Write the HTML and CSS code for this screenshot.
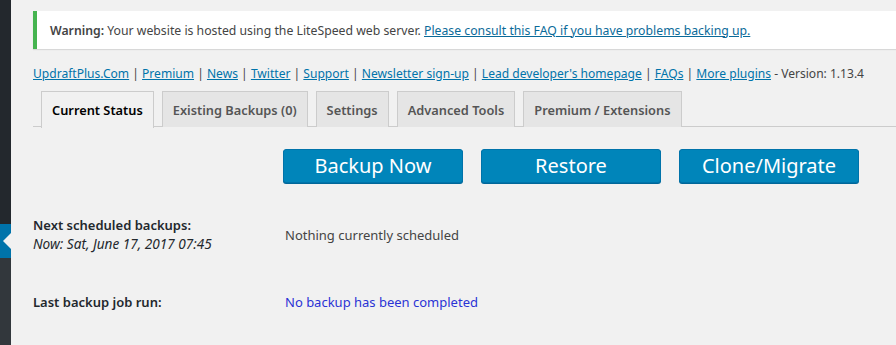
FILE: index.html
```html
<!DOCTYPE html>
<html>
<head>
<meta charset="utf-8">
<link rel="stylesheet" href="styles.css">
</head>
<body>
<div class="layout">
  <aside class="sidebar">
    <div class="menu-top"></div>
    <div class="menu-current"><span class="arrow"></span></div>
    <div class="submenu"></div>
  </aside>
  <main class="content">
    <div class="notice">
      <p><strong>Warning:</strong> Your website is hosted using the LiteSpeed web server. <a href="#">Please consult this FAQ if you have problems backing up.</a></p>
    </div>
    <p class="links"><a href="#">UpdraftPlus.Com</a> | <a href="#">Premium</a> | <a href="#">News</a> | <a href="#">Twitter</a> | <a href="#">Support</a> | <a href="#">Newsletter sign-up</a> | <a href="#">Lead developer's homepage</a> | <a href="#">FAQs</a> | <a href="#">More plugins</a> - Version: 1.13.4</p>
    <nav class="tabs">
      <a class="tab active" href="#">Current Status</a>
      <a class="tab" href="#">Existing Backups (0)</a>
      <a class="tab" href="#">Settings</a>
      <a class="tab" href="#">Advanced Tools</a>
      <a class="tab" href="#">Premium / Extensions</a>
    </nav>
    <div class="actions">
      <button class="btn">Backup Now</button>
      <button class="btn">Restore</button>
      <button class="btn">Clone/Migrate</button>
    </div>
    <div class="status-row first">
      <div class="label">
        <div class="label-title">Next scheduled backups:</div>
        <div class="label-sub">Now: Sat, June 17, 2017 07:45</div>
      </div>
      <div class="value">Nothing currently scheduled</div>
    </div>
    <div class="status-row second">
      <div class="label"><div class="label-title">Last backup job run:</div></div>
      <div class="value blue">No backup has been completed</div>
    </div>
  </main>
</div>
</body>
</html>
```
FILE: styles.css
```css
html, body {
  margin: 0;
  padding: 0;
  background: #f1f1f1;
  height: 345px;
  overflow: hidden;
}
body {
  font-family: "Noto Sans", "Open Sans", sans-serif;
  font-size: 13px;
  color: #444;
}
.layout {
  display: flex;
  height: 345px;
}
.sidebar {
  width: 11px;
  flex: none;
  display: flex;
  flex-direction: column;
}
.menu-top {
  height: 224px;
  background: #23282d;
}
.menu-current {
  height: 34px;
  background: #0073aa;
  position: relative;
}
.arrow {
  position: absolute;
  right: 0;
  top: 9px;
  width: 0;
  height: 0;
  border-top: 8px solid transparent;
  border-bottom: 8px solid transparent;
  border-right: 8px solid #f1f1f1;
}
.submenu {
  flex: 1;
  background: #32373c;
}
.content {
  flex: 1;
  padding-left: 22px;
  overflow: hidden;
}
.notice {
  margin-top: 11px;
  margin-right: -20px;
  background: #fff;
  border-left: 4px solid #46b450;
  box-shadow: 0 1px 1px rgba(0,0,0,0.1);
  padding: 1px 12px;
  height: 36px;
  display: flex;
  align-items: center;
}
.notice p {
  margin: 0;
  font-size: 12.25px;
  padding-left: 1px;
}
.notice strong {
  font-weight: 600;
}
a {
  color: #0073aa;
}
.notice a {
  color: #0a6a99;
}
.links {
  margin: 12px 0 0;
  line-height: 26px;
  font-size: 12.07px;
  white-space: nowrap;
}
.tabs {
  margin-top: 4px;
  display: flex;
  gap: 8px;
  padding-left: 8px;
  border-bottom: 1px solid #ccc;
  height: 35px;
  margin-right: -20px;
}
.tab {
  display: flex;
  align-items: center;
  padding: 0 10px;
  background: #e5e5e5;
  border: 1px solid #ccc;
  border-bottom: none;
  font-size: 12.8px;
  font-weight: 600;
  color: #555;
  text-decoration: none;
  height: 35px;
}
.tab.active {
  background: #f1f1f1;
  color: #000;
  height: 36px;
  margin-bottom: -1px;
}
.actions {
  display: flex;
  gap: 18px;
  padding-left: 250px;
  margin-top: 22px;
}
.btn {
  width: 180px;
  height: 34px;
  background: #0085ba;
  border: 1px solid #0073aa;
  border-radius: 3px;
  box-shadow: 0 1px 0 #006799;
  color: #fff;
  font-family: "Noto Sans", "Open Sans", sans-serif;
  font-size: 20px;
  padding: 0;
  line-height: 30px;
}
.status-row {
  display: flex;
  align-items: center;
}
.status-row.first {
  margin-top: 33px;
}
.status-row.second {
  margin-top: 40px;
}
.label {
  width: 252px;
  flex: none;
}
.label-title {
  font-weight: 600;
  color: #23282d;
}
.label-sub {
  font-style: italic;
  color: #23282d;
  font-size: 13.6px;
}
.value {
  color: #444;
}
.value.blue {
  color: #2a33d5;
}
```
